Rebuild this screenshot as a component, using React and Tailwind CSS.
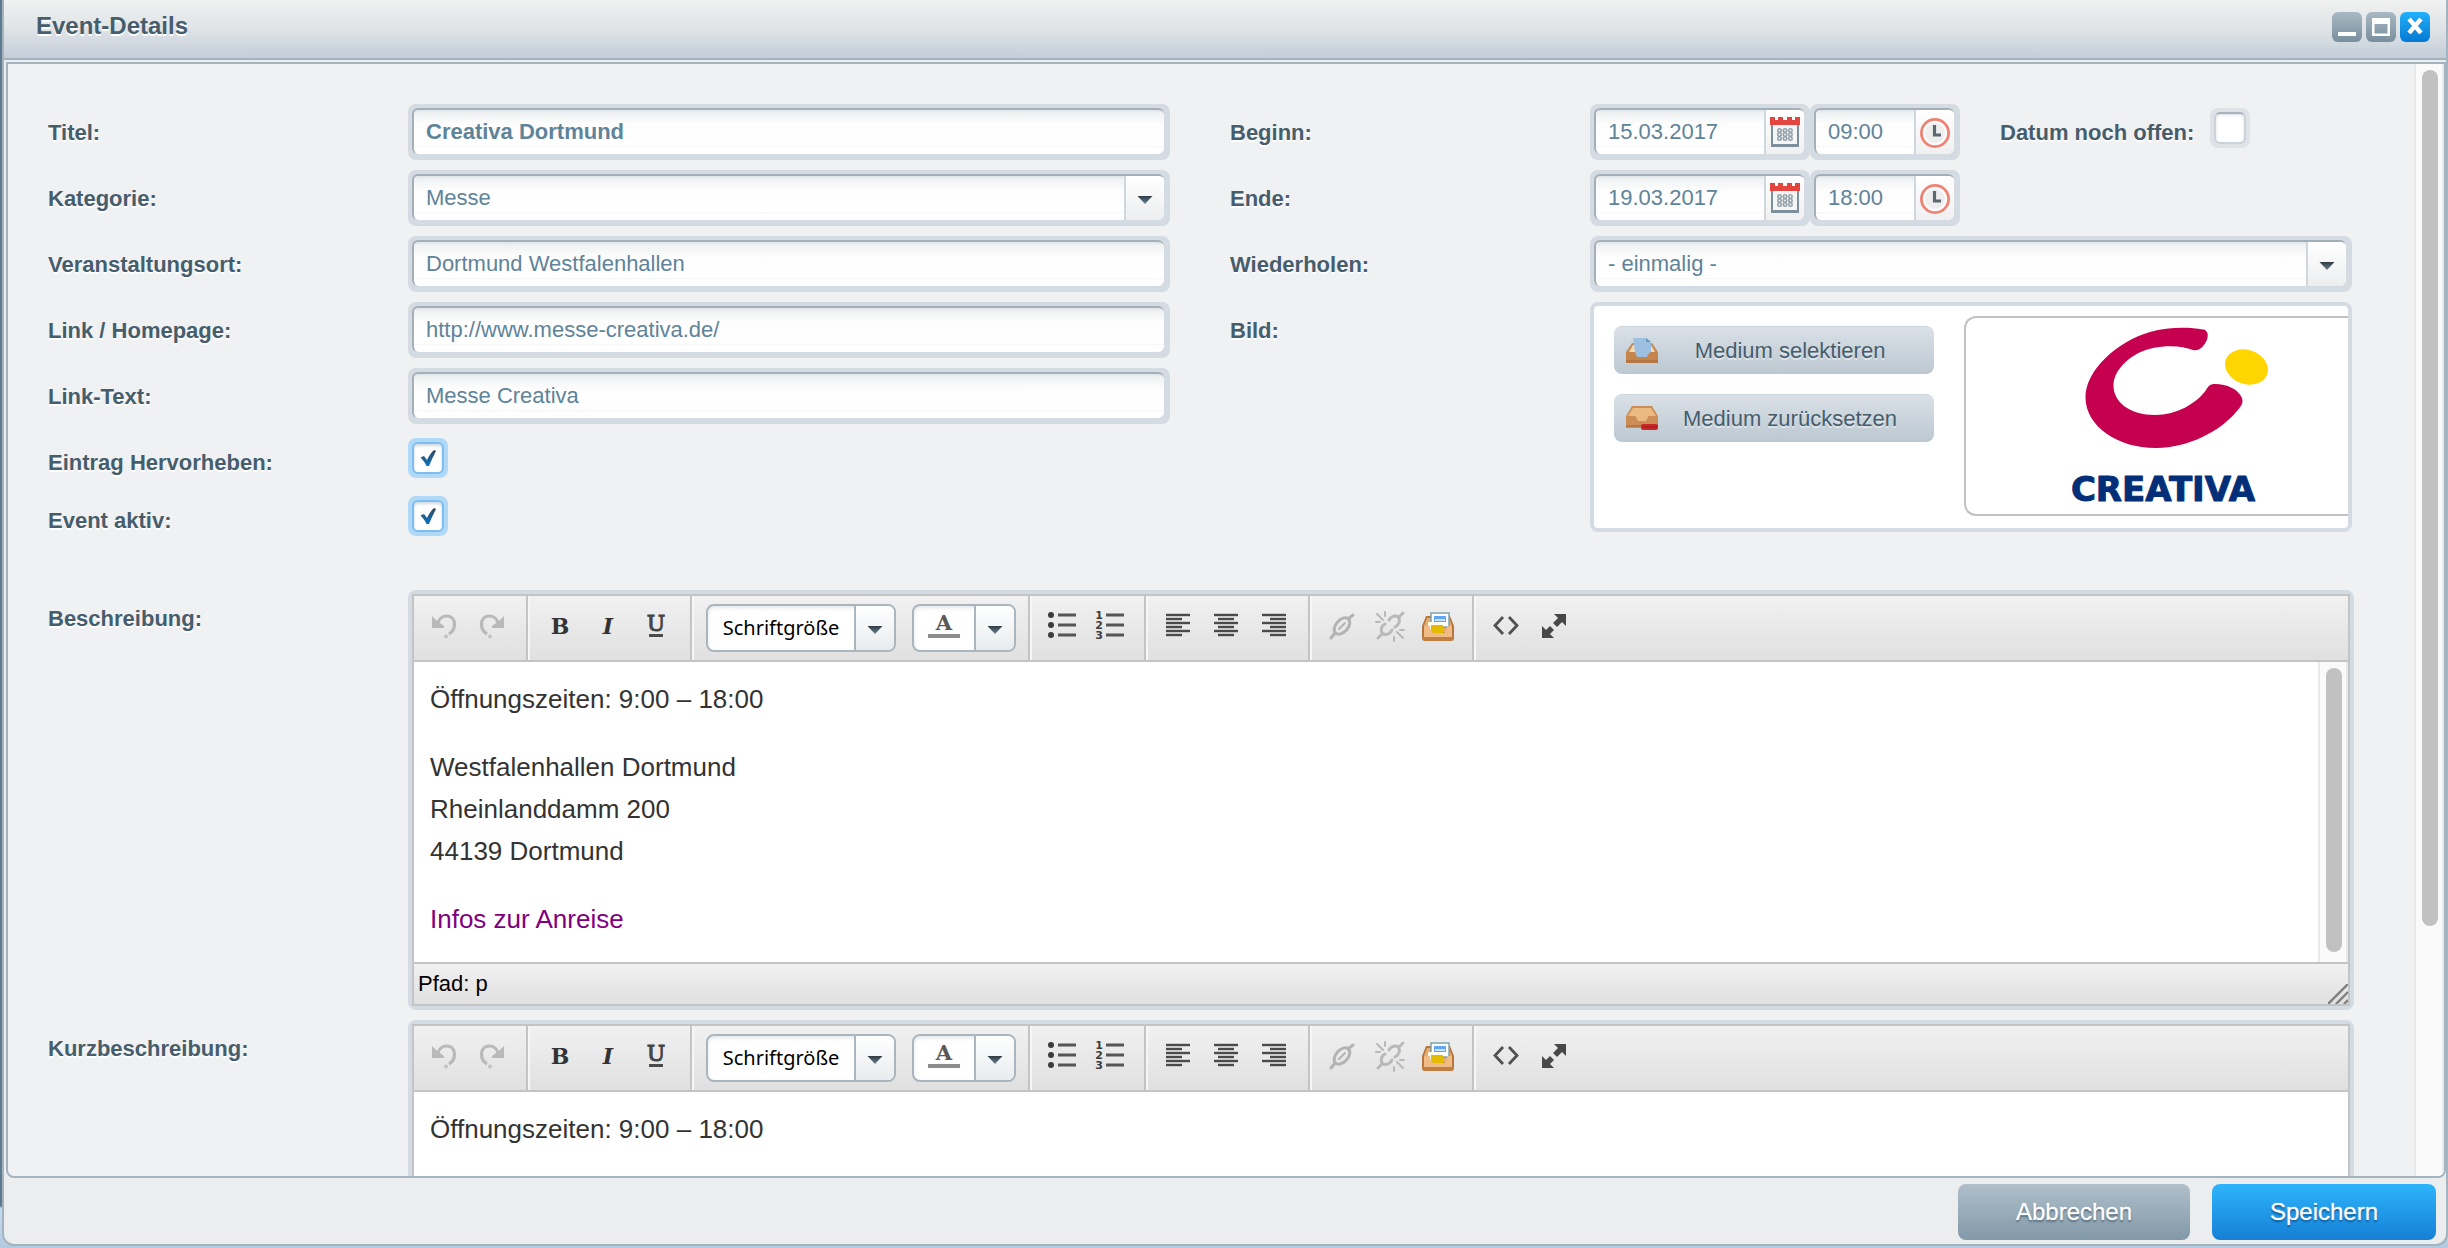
import React from "react";

const fieldFill =
  "bg-[linear-gradient(to_bottom,#dfe4e7_0px,#eff1f2_3px,#fdfdfd_14px,#ffffff_36px,#f4f5f6_36px,#ffffff_38px)]";

function Halo({ className = "", children }) {
  return (
    <div className={"flex h-14 rounded-lg bg-[#d5dbe2] pt-1 pr-1.5 pb-1.5 pl-1 " + className}>
      <div
        className={
          "relative flex min-w-0 flex-1 overflow-hidden rounded-md border-t-2 border-l-2 border-t-[#a4b0b8] border-l-[#a4b0b8] " +
          fieldFill
        }
      >
        {children}
      </div>
    </div>
  );
}

const inputText =
  "min-w-0 flex-1 appearance-none bg-transparent pl-3 text-[22px] leading-[42px] text-[#5f8399] outline-none";

function Label({ htmlFor, children, className = "w-[360px]" }) {
  return (
    <label
      htmlFor={htmlFor}
      className={
        "shrink-0 text-[22px] leading-[58px] font-bold text-[#465d6c] [text-shadow:0_2px_0_#ffffff] " + className
      }
    >
      {children}
    </label>
  );
}

function Row({ id, label, className = "mb-2.5", children }) {
  return (
    <div className={"flex h-14 " + className}>
      <Label htmlFor={id}>{label}</Label>
      {children}
    </div>
  );
}

function TextField({ id, value, bold }) {
  return (
    <Halo className="flex-1">
      <input id={id} type="text" defaultValue={value} className={inputText + (bold ? " font-bold" : "")} />
    </Halo>
  );
}

function Triangle() {
  return (
    <svg width="16" height="10" viewBox="0 0 16 10">
      <defs>
        <linearGradient id="tri" x1="0" y1="0" x2="0" y2="1">
          <stop offset="0" stopColor="#2f3b44" />
          <stop offset="1" stopColor="#6b8494" />
        </linearGradient>
      </defs>
      <path d="M0.500 1h15L8 9z" fill="url(#tri)" />
    </svg>
  );
}

function SelectField({ id, value }) {
  return (
    <Halo className="flex-1">
      <select id={id} className={inputText} defaultValue={value}>
        <option>{value}</option>
      </select>
      <div className="pointer-events-none absolute inset-y-0 right-0 flex w-10 items-center justify-center border-l-2 border-[#cfd6dc] bg-linear-to-b from-white to-[#eceeef] pt-1">
        <Triangle />
      </div>
    </Halo>
  );
}

const sideButton =
  "flex w-10 shrink-0 items-center justify-center border-l-2 border-[#cfd6dc] bg-linear-to-b from-white to-[#f0f0f0]";

function CalendarIcon() {
  return (
    <svg width="32" height="34" viewBox="0 0 32 34">
      <rect x="2" y="9" width="28" height="23" fill="#7b8f9c" />
      <rect x="4" y="9" width="24" height="20" fill="#f5f5f5" />
      <path d="M1 2h5v3h3V2h5v3h4V2h5v3h3V2h5v8H1z" fill="#e2463f" />
      <g fill="none" stroke="#93a2ad" strokeWidth="1.600">
        {[10.5, 16, 21.5].map((x) =>
          [15.5, 19.5, 23.5].map((y) => <circle key={x + "-" + y} cx={x} cy={y} r="1.700" />)
        )}
      </g>
    </svg>
  );
}

function ClockIcon() {
  return (
    <svg width="34" height="34" viewBox="0 0 34 34">
      <circle cx="17" cy="18" r="13.600" fill="#fbfbfb" stroke="#ee8375" strokeWidth="2.800" />
      <circle cx="17" cy="18" r="10" fill="#eeeeee" />
      <path d="M16.500 10v10h6.500" fill="none" stroke="#5a6872" strokeWidth="3.200" />
    </svg>
  );
}

function DateTime({ id, name, date, time }) {
  return (
    <div className="flex">
      <Halo className="w-[220px]">
        <input id={id} type="text" defaultValue={date} className={inputText} />
        <button type="button" aria-label={"Datum wählen: " + name} className={sideButton}>
          <CalendarIcon />
        </button>
      </Halo>
      <Halo className="w-[150px]">
        <input type="text" aria-label={"Uhrzeit: " + name} defaultValue={time} className={inputText} />
        <button type="button" aria-label={"Uhrzeit wählen: " + name} className={sideButton}>
          <ClockIcon />
        </button>
      </Halo>
    </div>
  );
}

function CheckBox({ id, checked }) {
  return (
    <span
      className={
        "mt-1 grid h-10 w-10 shrink-0 place-items-center rounded-lg " + (checked ? "bg-[#b0d9f8]" : "bg-[#dfe2e6]")
      }
    >
      <input
        id={id}
        type="checkbox"
        defaultChecked={checked}
        className={
          "col-start-1 row-start-1 h-8 w-8 appearance-none rounded-md border-2 bg-white " +
          (checked
            ? "border-[#7dbdf0] shadow-[inset_0_2px_3px_#cfd8df]"
            : "border-[#cdd2d8] border-t-[#a9b4bc] shadow-[inset_0_1px_3px_#d5dade]")
        }
      />
      {checked && (
        <svg className="pointer-events-none col-start-1 row-start-1" width="20" height="20" viewBox="0 0 20 20">
          <defs>
            <linearGradient id="tick" x1="0" y1="0" x2="0" y2="1">
              <stop offset="0" stopColor="#33485a" />
              <stop offset="1" stopColor="#0a74c4" />
            </linearGradient>
          </defs>
          <path
            d="M2.500 9.500l3.500-1.500 3 4C11 8 13 4.500 16 2l2 1C15.500 8 13 13 11 18H8.500C7 14.500 5 12 2.500 9.500z"
            fill="url(#tick)"
          />
        </svg>
      )}
    </span>
  );
}

function InboxOpenIcon() {
  return (
    <svg width="32" height="30" viewBox="0 0 32 30">
      <path d="M6 7h20l6 9v11H0V16z" fill="#c78a55" />
      <path d="M7 9h18l4 7H3z" fill="#f3d9b4" />
      <path d="M0 16h8l3 5h10l3-5h8v11H0z" fill="#c5844c" />
      <path d="M0 24h32v3H0z" fill="#b57746" />
      <path d="M7 2h13l5 4v10c-2 1-3 2-4 5h-9c-1 0-2-2-3-5z" fill="#9dc0e2" />
      <path d="M20 2l5 4h-5z" fill="#6f93bb" />
    </svg>
  );
}

function InboxRemoveIcon() {
  return (
    <svg width="32" height="30" viewBox="0 0 32 30">
      <path d="M6 2h20l6 10v12H0V12z" fill="#cc8d57" />
      <path d="M7 4h18l5 8H2z" fill="#eaba82" />
      <path d="M9 11h14l-3 6h-8z" fill="#eaba82" />
      <path d="M0 21h32v2H0z" fill="#b87845" />
      <rect x="15" y="20" width="17" height="6" rx="2" fill="#c62828" />
      <path d="M17 23h15" stroke="#a01818" strokeWidth="1" />
    </svg>
  );
}

function MediaButton({ icon, children }) {
  return (
    <button
      type="button"
      className="flex h-12 w-80 items-center rounded-lg border-t border-[#cdd6dd] bg-linear-to-b from-[#dae0e7] to-[#bcc8d1] pl-3 text-[22px] text-[#465d6c] [text-shadow:0_2px_0_#dfe5ea]"
    >
      {icon}
      <span className="flex-1 pr-3 text-center">{children}</span>
    </button>
  );
}

function CreativaLogo() {
  return (
    <svg width="260" height="190" viewBox="0 0 260 190" role="img" aria-label="Creativa">
      <path
        d="M166 13C169 15 168 22 164 27C160 32 156 33 153 32C143 28 128 27 113 30C93 34 74 50 73.500 67C73 84 90 97 115 97C137 97 157 85 166 72C168.500 68 170 66 175 66C187 66 198 71 202 80C203.500 85 201.500 88 197 93C181 113 148 130 116 130C77 130 46 108 45.500 80C45 52 78 23 110 14C128 9 148 9 163 11.500C164.500 11.500 165.500 12 166 13z"
        fill="#c5004e"
      />
      <ellipse cx="206.500" cy="49" rx="22" ry="17" transform="rotate(20 206.500 49)" fill="#ffd500" />
      <text
        x="123"
        y="183"
        textAnchor="middle"
        fontFamily="'DejaVu Sans', sans-serif"
        fontWeight="700"
        fontSize="34"
        fill="#032f78"
        stroke="#032f78"
        strokeWidth="1"
        strokeLinejoin="round"
      >
        CREATIVA
      </text>
    </svg>
  );
}

/* Toolbar glyphs, all on a 32 x 32 grid */

function Svg({ children }) {
  return (
    <svg width="32" height="32" viewBox="0 0 32 32" className="shrink-0 overflow-visible">
      {children}
    </svg>
  );
}

const undoShape = (
  <>
    <path d="M10 13C12 4 26 3 26.500 14C26.500 19 24.500 22 21 24" fill="none" stroke="#b9b9b9" strokeWidth="3.200" />
    <path d="M4 6l4 4 8 6v2H4z" fill="#b9b9b9" />
    <circle cx="18" cy="26.500" r="2" fill="#c3c3c3" />
  </>
);

const UndoIcon = () => <Svg>{undoShape}</Svg>;

const RedoIcon = () => (
  <Svg>
    <g transform="matrix(-1 0 0 1 32 0)">{undoShape}</g>
  </Svg>
);

function Letter({ char, italic, size = 22, weight = 700, y = 24, bar, fill = "#444444", stroke = 0 }) {
  return (
    <Svg>
      <text
        x="16"
        y={y}
        textAnchor="middle"
        fontFamily="'DejaVu Serif', serif"
        fontWeight={weight}
        fontStyle={italic ? "italic" : "normal"}
        fontSize={size}
        fill={fill}
        stroke={fill}
        strokeWidth={stroke}
      >
        {char}
      </text>
      {bar}
    </Svg>
  );
}

const BulletIcon = () => (
  <Svg>
    {[5, 15, 25].map((y) => (
      <g key={y}>
        <circle cx="5" cy={y} r="3" fill="#3c3c3c" />
        <path d={`M12 ${y}h18`} stroke="#555555" strokeWidth="3" />
      </g>
    ))}
  </Svg>
);

const NumberIcon = () => (
  <Svg>
    {[5, 15, 25].map((y, i) => (
      <g key={y}>
        <text
          x="5"
          y={y + 4}
          textAnchor="middle"
          fontFamily="'DejaVu Sans', sans-serif"
          fontWeight="700"
          fontSize="11"
          fill="#3c3c3c"
        >
          {i + 1}
        </text>
        <path d={`M12 ${y}h18`} stroke="#555555" strokeWidth="3" />
      </g>
    ))}
  </Svg>
);

function AlignIcon({ from, to }) {
  return (
    <Svg>
      {[5, 9, 13, 17, 21, 25].map((y, i) => (
        <path key={y} d={i % 2 ? `M${from} ${y}H${to}` : `M4 ${y}H28`} stroke="#4a4a4a" strokeWidth="2.400" />
      ))}
    </Svg>
  );
}

const LinkIcon = () => (
  <Svg>
    <g fill="none" stroke="#b3b3b3" strokeLinecap="round">
      <ellipse cx="16" cy="16" rx="9.500" ry="6" transform="rotate(-48 16 16)" strokeWidth="3" />
      <path d="M5 28l4-5M22 9l5-4" strokeWidth="3" />
      <path d="M13 19l6-6" strokeWidth="2" />
    </g>
  </Svg>
);

const UnlinkIcon = () => (
  <Svg>
    <g fill="none" stroke="#b9b9b9" strokeWidth="3" strokeLinecap="round">
      <path d="M4 28l4-4M25 7l4-4" />
      <path d="M11 14c-4 2-5 7-2 10 3 1 7 0 9-4" />
      <path d="M15 10c2-4 7-5 9-3 3 3 1 8-3 10" />
      <path d="M3 4l6 6M11 2v4M2 12h4M23 22l6 6M20 27v4M26 20h4" strokeWidth="2" />
    </g>
  </Svg>
);

const MediaIcon = () => (
  <Svg>
    <path d="M4 6h24l4 10v12a3 3 0 0 1-3 3H3a3 3 0 0 1-3-3V16z" fill="#b8763f" />
    <path d="M5 8h22l3 8v6H2v-6z" fill="#e6ab70" />
    <rect x="9" y="3" width="18" height="14" fill="#ffffff" stroke="#7fa3a8" strokeWidth="1.500" />
    <rect x="12" y="6" width="12" height="6" fill="#62a6f2" />
    <path d="M13 9h10v2H13z" fill="#c9e2fb" />
    <rect x="6" y="12" width="14" height="10" fill="#fffbe8" />
    <path d="M9 15h12v8H9z" fill="#e3bb00" />
    <path d="M2 16h6v3l3 4h11l3-4v-3h5v12a2 2 0 0 1-2 2H4a2 2 0 0 1-2-2z" fill="#f0bb84" />
    <path d="M1 27h30v1a3 3 0 0 1-3 3H4a3 3 0 0 1-3-3z" fill="#c07f43" />
  </Svg>
);

const CodeIcon = () => (
  <Svg>
    <path d="M13 7L5 15.500l8 8.500M19 7l8 8.500-8 8.500" fill="none" stroke="#505050" strokeWidth="2.800" />
  </Svg>
);

const ExpandIcon = () => (
  <Svg>
    <path d="M16 4h12v12l-4-4-5 5-4-4 5-5zM4 16l4 4 4-4 4 4-4 4 4 4H4z" fill="#484848" />
  </Svg>
);

function Tool({ name, children }) {
  return (
    <button type="button" aria-label={name} className="flex h-14 w-12 items-center justify-center pb-1">
      {children}
    </button>
  );
}

function Group({ className = "pl-1.5 pr-2.5", last, children }) {
  return (
    <div
      className={
        "flex items-center border-l-2 border-l-[#f6f6f6] " + (last ? "" : "border-r-2 border-r-[#c4c4c4] ") + className
      }
    >
      {children}
    </div>
  );
}

const comboArrow =
  "flex w-10 items-center justify-center border-l-2 border-[#aab5be] bg-linear-to-b from-white to-[#e9ecee] pt-1";
const comboBox =
  "flex h-12 overflow-hidden rounded-lg border-2 border-[#aab5be] bg-white shadow-[inset_0_2px_4px_#e3e8ec]";

function Editor({ id, scrollable, status, children }) {
  return (
    <div className="min-w-0 flex-1 rounded-lg bg-[#d5dbe2] p-1">
      <div className="border-2 border-[#c4c4c4] bg-white">
        <div className="flex h-[66px] border-b-2 border-[#c4c4c4] bg-linear-to-b from-[#f1f1f1] to-[#e0e0e0]">
          <div className="flex items-center border-r-2 border-[#c4c4c4] pr-2.5 pl-1.5">
            <Tool name="Rückgängig"><UndoIcon /></Tool>
            <Tool name="Wiederholen"><RedoIcon /></Tool>
          </div>
          <Group>
            <Tool name="Fett"><Letter char="B" fill="#333333" /></Tool>
            <Tool name="Kursiv"><Letter char="I" italic fill="#333333" /></Tool>
            <Tool name="Unterstrichen">
              <Letter
                char="U"
                y={21}
                weight={400}
                stroke={1}
                bar={<path d="M9 25.500h14" stroke="#4a4a4a" strokeWidth="3" />}
              />
            </Tool>
          </Group>
          <Group className="gap-4 px-3">
            <div className={comboBox + " w-[190px]"}>
              <button type="button" className="flex-1 text-center font-['Noto_Sans',sans-serif] text-xl text-black">
                Schriftgröße
              </button>
              <button type="button" aria-label="Schriftgröße wählen" className={comboArrow}><Triangle /></button>
            </div>
            <div className={comboBox + " w-[104px]"}>
              <button type="button" aria-label="Textfarbe" className="flex flex-1 items-center justify-center pb-1">
                <Letter
                  char="A"
                  y={20}
                  size={21}
                  bar={<path d="M0 26h32" stroke="#8c8c8c" strokeWidth="4" />}
                  fill="#5a5a5a"
                />
              </button>
              <button type="button" aria-label="Textfarbe wählen" className={comboArrow}><Triangle /></button>
            </div>
          </Group>
          <Group>
            <Tool name="Aufzählung"><BulletIcon /></Tool>
            <Tool name="Nummerierung"><NumberIcon /></Tool>
          </Group>
          <Group>
            <Tool name="Linksbündig"><AlignIcon from={4} to={20} /></Tool>
            <Tool name="Zentriert"><AlignIcon from={8} to={24} /></Tool>
            <Tool name="Rechtsbündig"><AlignIcon from={12} to={28} /></Tool>
          </Group>
          <Group>
            <Tool name="Link einfügen"><LinkIcon /></Tool>
            <Tool name="Link entfernen"><UnlinkIcon /></Tool>
            <Tool name="Medium einfügen"><MediaIcon /></Tool>
          </Group>
          <Group last>
            <Tool name="Quelltext"><CodeIcon /></Tool>
            <Tool name="Vollbild"><ExpandIcon /></Tool>
          </Group>
        </div>
        <div className="flex h-[300px]">
          <div
            id={id}
            role="textbox"
            aria-multiline="true"
            className="flex flex-1 flex-col gap-[26px] px-4 pt-4 text-[26px] leading-[42px] text-[#333333]"
          >
            {children}
          </div>
          {scrollable && (
            <div className="w-[30px] border-x-2 border-[#e8e8e8] bg-[#fafafa] py-1.5 pl-1.5">
              <div className="h-[284px] w-4 rounded-full bg-[#c1c1c1]" />
            </div>
          )}
        </div>
        {status && (
          <div className="flex h-[42px] items-end justify-between border-t-2 border-[#c4c4c4] bg-linear-to-b from-[#f1f1f1] to-[#e0e0e0]">
            <span className="pl-1 text-[22px] leading-10 text-black">{status}</span>
            <svg width="20" height="20" viewBox="0 0 20 20">
              <path d="M0 20L20 0M8 20L20 8M16 20l4-4" stroke="#808080" strokeWidth="2.400" fill="none" />
            </svg>
          </div>
        )}
      </div>
    </div>
  );
}

function WindowButton({ name, blue, children }) {
  return (
    <button
      type="button"
      aria-label={name}
      className={
        "h-[30px] w-[30px] rounded-md bg-linear-to-b " +
        (blue ? "from-[#22b0fb] to-[#0579d3]" : "from-[#a9b9c3] to-[#788f9e]")
      }
    >
      <svg width="30" height="30" viewBox="0 0 30 30">
        {children}
      </svg>
    </button>
  );
}

export default function App() {
  return (
    <div className="flex h-screen bg-[linear-gradient(to_bottom,#5f7b90_0px,#5f7b90_1206px,#c3dcee_1208px,#b4cadf_100%)] pb-0.5 pl-0.5 font-['Liberation_Sans',Arial,sans-serif]">
      <div className="flex min-w-0 flex-1 flex-col overflow-hidden rounded-b-xl border-x-2 border-b-2 border-[#a3b4c0] bg-[#ebedef]">
        <header className="flex h-[60px] shrink-0 items-start justify-between border-b-2 border-[#a3b4c0] bg-linear-to-b from-[#f1f2f1] via-[#dfe3e6] to-[#c3ced9] pt-3 pr-4 pl-8">
          <h1 className="text-2xl leading-7 font-bold text-[#465d6c] [text-shadow:0_2px_0_#ffffff]">Event-Details</h1>
          <div className="flex gap-1">
            <WindowButton name="Minimieren">
              <path d="M6 20h18v4H6z" fill="#ffffff" />
            </WindowButton>
            <WindowButton name="Maximieren">
              <path d="M6 6h18v18H6zM8.500 12v9.500h13V12z" fill="#ffffff" fillRule="evenodd" />
            </WindowButton>
            <WindowButton name="Schließen" blue>
              <path d="M9 8l12 14M21 8L9 22" stroke="#0b62ad" strokeOpacity="0.500" strokeWidth="4.500" />
              <path d="M9 7l12 14M21 7L9 21" stroke="#ffffff" strokeWidth="4.500" />
            </WindowButton>
          </div>
        </header>

        <main className="mt-0.5 ml-0.5 flex min-h-0 flex-1 overflow-hidden rounded-b-lg border-2 border-[#a3b4c0] bg-[#f0f1f3]">
          <form className="min-w-0 flex-1 overflow-hidden pt-10 pl-10">
            <div className="mb-[42px] grid grid-cols-2 gap-[60px] pr-[62px]">
              <div>
                <Row id="titel" label="Titel:"><TextField id="titel" value="Creativa Dortmund" bold /></Row>
                <Row id="kategorie" label="Kategorie:"><SelectField id="kategorie" value="Messe" /></Row>
                <Row id="ort" label="Veranstaltungsort:"><TextField id="ort" value="Dortmund Westfalenhallen" /></Row>
                <Row id="link" label="Link / Homepage:"><TextField id="link" value="http://www.messe-creativa.de/" /></Row>
                <Row id="linktext" label="Link-Text:"><TextField id="linktext" value="Messe Creativa" /></Row>
                <Row id="hervorheben" label="Eintrag Hervorheben:" className="mb-0.5"><CheckBox id="hervorheben" checked /></Row>
                <Row id="aktiv" label="Event aktiv:" className=""><CheckBox id="aktiv" checked /></Row>
              </div>
              <div>
                <Row id="beginn" label="Beginn:">
                  <DateTime id="beginn" name="Beginn" date="15.03.2017" time="09:00" />
                  <Label htmlFor="offen" className="mr-4 ml-10">Datum noch offen:</Label>
                  <CheckBox id="offen" />
                </Row>
                <Row id="ende" label="Ende:">
                  <DateTime id="ende" name="Ende" date="19.03.2017" time="18:00" />
                </Row>
                <Row id="wiederholen" label="Wiederholen:"><SelectField id="wiederholen" value="- einmalig -" /></Row>
                <div className="flex">
                  <div className="w-[360px] shrink-0 text-[22px] leading-[58px] font-bold text-[#465d6c] [text-shadow:0_2px_0_#ffffff]">
                    Bild:
                  </div>
                  <div className="flex h-[230px] min-w-0 flex-1 overflow-hidden rounded-lg border-4 border-[#d5dbe2] bg-white pl-5">
                    <div className="mr-[30px] flex shrink-0 flex-col gap-5 pt-5">
                      <MediaButton icon={<InboxOpenIcon />}>Medium selektieren</MediaButton>
                      <MediaButton icon={<InboxRemoveIcon />}>Medium zurücksetzen</MediaButton>
                    </div>
                    <div className="mt-2.5 h-[200px] min-w-0 flex-1 overflow-hidden rounded-l-xl border-y-2 border-l-2 border-[#c1c1c1] pl-[74px]">
                      <CreativaLogo />
                    </div>
                  </div>
                </div>
              </div>
            </div>

            <div className="mb-2.5 flex pr-[60px]">
              <Label htmlFor="beschreibung">Beschreibung:</Label>
              <Editor id="beschreibung" scrollable status="Pfad: p">
                <p>Öffnungszeiten: 9:00 – 18:00</p>
                <p>
                  Westfalenhallen Dortmund
                  <br />
                  Rheinlanddamm 200
                  <br />
                  44139 Dortmund
                </p>
                <p>
                  <a href="#anreise" className="text-[#800080]">Infos zur Anreise</a>
                </p>
              </Editor>
            </div>
            <div className="flex pr-[60px]">
              <Label htmlFor="kurzbeschreibung">Kurzbeschreibung:</Label>
              <Editor id="kurzbeschreibung">
                <p>Öffnungszeiten: 9:00 – 18:00</p>
              </Editor>
            </div>
          </form>
          <div className="w-[30px] shrink-0 border-x-2 border-[#e8e8e8] bg-[#fafafa] py-1.5 pl-1.5">
            <div className="h-[856px] w-4 rounded-full bg-[#c1c1c1]" />
          </div>
        </main>

        <footer className="flex h-[66px] shrink-0 items-start justify-end gap-[22px] pt-1.5 pr-2.5">
          <button
            type="button"
            className="h-14 w-[232px] rounded-lg bg-linear-to-b from-[#b0bfca] to-[#8299a8] text-2xl text-white [text-shadow:0_2px_2px_#54697a,0_0_1px_#ffffff]"
          >
            Abbrechen
          </button>
          <button
            type="button"
            className="h-14 w-[224px] rounded-lg bg-linear-to-b from-[#2eb4fb] to-[#1680d6] text-2xl text-white [text-shadow:0_2px_2px_#0f5796,0_0_1px_#ffffff]"
          >
            Speichern
          </button>
        </footer>
      </div>
    </div>
  );
}
